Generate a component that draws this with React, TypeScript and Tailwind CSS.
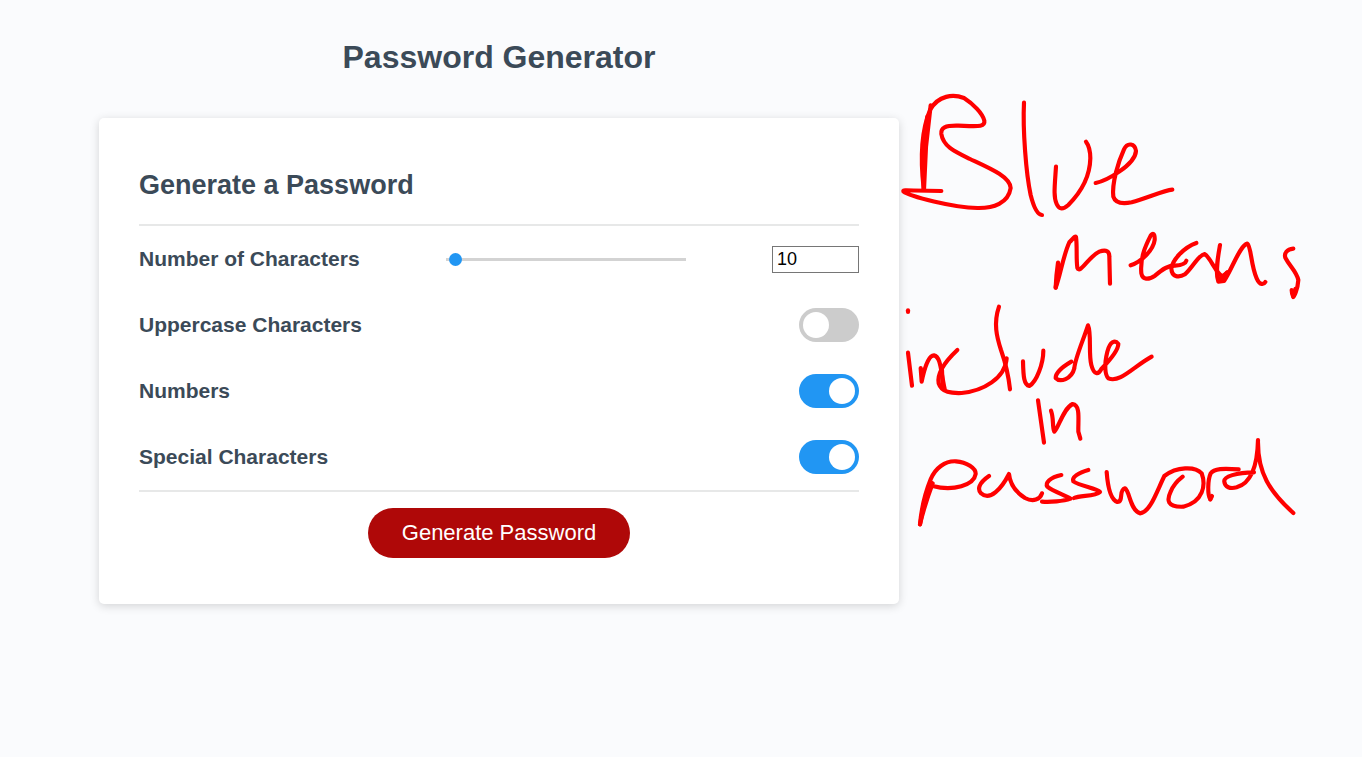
import { useState } from "react";

type ToggleRowProps = {
  id: string;
  label: string;
  checked: boolean;
  onChange: (value: boolean) => void;
};

function ToggleRow({ id, label, checked, onChange }: ToggleRowProps) {
  return (
    <div className="flex h-[66px] items-center justify-between">
      <label htmlFor={id} className="text-[21px] leading-6 font-bold">
        {label}
      </label>
      <input
        id={id}
        type="checkbox"
        role="switch"
        checked={checked}
        onChange={(e) => onChange(e.target.checked)}
        className="flex h-[34px] w-[60px] cursor-pointer appearance-none items-center rounded-full bg-[#cccccc] px-1 before:size-[26px] before:rounded-full before:bg-white before:content-[''] checked:justify-end checked:bg-[#2196f3]"
      />
    </div>
  );
}

/* Handwritten note in the margin: "Blue means include in password" */
function InkNote() {
  return (
    <svg
      className="pointer-events-none absolute -top-7 left-full h-[450px] w-[411px]"
      viewBox="899 90 411 450"
      fill="none"
      stroke="#ff0000"
      strokeWidth="12.5"
      strokeLinecap="round"
      strokeLinejoin="round"
      role="img"
      aria-label="Blue means include in password"
    >
      <g transform="translate(890 80) scale(0.33333)">
        <path d="M122 76L108 200L102 328" />
        <path d="M101 325L98 230L112 110" />
        <path d="M101 325C90 230 95 150 120 90C145 45 190 42 222 54C250 72 278 100 283 122C286 142 265 139 205 137C165 136 152 143 154 162C160 200 195 215 240 237C300 265 360 290 362 324C355 370 310 385 262 384C190 382 60 350 40 334C38 328 60 333 154 333" />
        <path d="M402 68C398 150 408 280 422 345C432 385 442 404 456 405" />
        <path d="M498 260C494 320 490 350 500 372C508 390 520 388 535 375C575 335 600 285 601 235C601 210 594 193 588 185" />
        <path d="M617 309C650 302 735 255 738 213C735 190 712 186 702 208C685 245 665 310 670 350C676 370 700 372 725 367C770 355 820 332 847 329" />
      </g>
      <g transform="translate(1030 215) scale(0.33333)">
        <path d="M84 143C80 170 78 195 77 218C90 185 100 120 118 82C130 70 135 62 138 66C142 95 138 130 142 158C150 180 175 125 208 110C230 102 238 110 238 125L240 206" />
        <path d="M77 218L88 150" />
        <path d="M302 151C335 140 370 105 374 75C375 55 368 52 362 62C345 95 330 130 334 175C338 195 355 195 375 182C400 160 415 152 435 152C455 150 467 145 469 137" />
        <path d="M499 84C460 98 428 135 424 160C425 185 445 190 465 178C490 155 505 120 524 117C540 125 560 180 578 184L592 172" />
        <path d="M570 90C564 125 555 170 565 200L582 198C605 165 630 90 652 86C664 95 662 150 680 190C690 213 702 208 706 201" />
        <path d="M564 190L578 190L592 172" />
        <path d="M790 101C770 103 762 115 766 128C780 155 800 170 805 195C803 225 792 245 790 246C787 240 785 232 785 225" />
        <path d="M790 244L796 222" />
      </g>
      <g transform="translate(890 290) scale(0.33333)">
        <path d="M54 61L54 66" />
        <path d="M54 188L66 287" />
        <path d="M92 234L95 275C102 240 115 195 132 196C152 200 152 240 164 297" />
        <path d="M156 240L158 295" />
        <path d="M202 180C165 215 140 250 146 280C155 308 185 310 215 309C280 303 345 265 350 205" />
        <path d="M327 50C310 100 320 140 333 180C347 220 355 250 360 298" />
        <path d="M399 214C400 260 402 285 418 288C440 275 460 220 460 182" />
        <path d="M544 215C515 232 497 250 497 264C510 278 545 268 553 235C555 205 580 150 594 106C605 130 595 190 604 225C612 255 625 255 634 237C665 205 685 180 685 162C675 148 660 155 652 185C642 225 645 255 655 265C690 280 730 230 785 200" />
        <path d="M444 331L462 458" />
        <path d="M483 362C492 385 486 410 493 425C505 415 520 355 548 342C572 345 564 390 565 425L571 446" />
      </g>
      <g transform="translate(900 430) scale(0.33333)">
        <path d="M98 160C85 195 70 240 60 283C64 240 75 190 92 148C105 115 135 92 168 94C200 96 228 115 227 132C222 165 160 185 98 168" />
        <path d="M60 283L74 210L94 158" />
        <path d="M267 138C235 160 232 178 243 190C270 215 305 175 327 132C330 160 345 185 375 204C400 217 420 208 426 190" />
        <path d="M484 135C450 142 435 158 442 170C460 185 495 195 512 206C490 214 450 217 426 215" />
        <path d="M565 120C535 128 515 142 520 154C540 168 590 175 600 186C585 200 540 195 522 204" />
        <path d="M620 126C624 180 635 210 652 216C672 215 655 180 675 175C690 185 690 240 720 250C750 248 770 185 793 138C830 110 885 108 905 130C918 165 910 215 850 230C800 232 800 210 812 185C820 165 835 150 848 140" />
        <path d="M931 208C922 195 923 150 932 130C942 115 970 115 1016 118" />
        <path d="M931 208L936 198" />
        <path d="M1062 127C1010 127 970 140 973 155C975 172 990 177 1010 172C1045 162 1072 120 1074 30C1072 130 1110 185 1180 249" />
      </g>
    </svg>
  );
}

export default function App() {
  const [length, setLength] = useState(10);
  const [uppercase, setUppercase] = useState(false);
  const [numbers, setNumbers] = useState(true);
  const [special, setSpecial] = useState(true);

  return (
    <div className="min-h-screen overflow-x-hidden bg-[#fafbfd] pt-[41px] pb-10 pl-[99px] font-['Liberation_Sans',Arial,sans-serif] text-[#3b4a58]">
      <main className="w-full max-w-[800px]">
        <h1 className="mb-[45px] text-center text-[32px] leading-8 font-bold">Password Generator</h1>

        <div className="relative">
          <form
            onSubmit={(e) => e.preventDefault()}
            className="rounded-[5px] bg-white px-10 pt-10 pb-[46px] shadow-[0_2px_10px_rgba(0,0,0,0.16)]"
          >
            <h2 className="pt-[9px] pb-[21px] text-[27px] leading-9 font-bold">Generate a Password</h2>

            <div className="border-y-2 border-[#e7e8e8]">
              <div className="flex h-[66px] items-center justify-between">
                <label htmlFor="length-range" className="text-[21px] leading-6 font-bold">
                  Number of Characters
                </label>
                <input
                  id="length-range"
                  type="range"
                  min={8}
                  max={160}
                  value={length}
                  onChange={(e) => setLength(Number(e.target.value))}
                  className="h-[3px] w-60 cursor-pointer appearance-none bg-[#d3d3d3] [&::-webkit-slider-thumb]:size-[13px] [&::-webkit-slider-thumb]:appearance-none [&::-webkit-slider-thumb]:rounded-full [&::-webkit-slider-thumb]:bg-[#2196f3]"
                />
                <input
                  type="number"
                  aria-label="Number of Characters"
                  min={8}
                  max={160}
                  value={length}
                  onChange={(e) => setLength(Number(e.target.value))}
                  className="h-[27px] w-[87px] border border-[#767676] bg-white px-1 text-[18px] leading-6 text-black"
                />
              </div>
              <ToggleRow id="uppercase" label="Uppercase Characters" checked={uppercase} onChange={setUppercase} />
              <ToggleRow id="numbers" label="Numbers" checked={numbers} onChange={setNumbers} />
              <ToggleRow id="special" label="Special Characters" checked={special} onChange={setSpecial} />
            </div>

            <div className="flex justify-center pt-4">
              <button
                type="submit"
                className="h-[50px] cursor-pointer rounded-full bg-[#af0808] px-[34px] text-[22px] leading-6 text-white"
              >
                Generate Password
              </button>
            </div>
          </form>
          <InkNote />
        </div>
      </main>
    </div>
  );
}
